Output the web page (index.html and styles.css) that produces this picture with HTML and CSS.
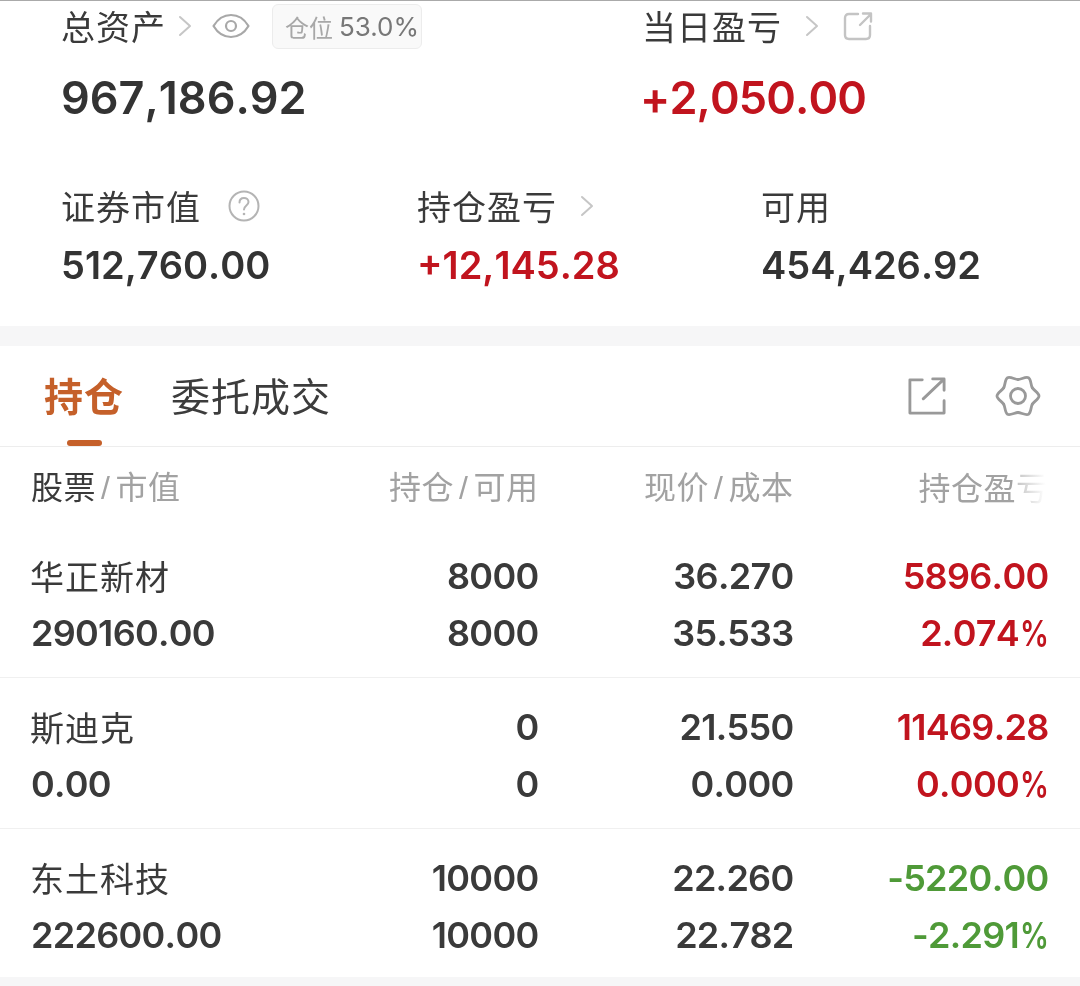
FILE: index.html
```html
<!DOCTYPE html>
<html lang="zh">
<head>
<meta charset="utf-8">
<title>持仓</title>
<link rel="stylesheet" href="styles.css">
</head>
<body>
<main class="page">
  <section class="summary">
    <div class="sum-top">
      <div class="sum-a">
        <div class="label-row">
          <span class="label">总资产</span>
          <svg class="chev first" viewBox="0 0 14 22"><path d="M2 2l10 9-10 9"/></svg>
          <svg class="eye" viewBox="0 0 38 26"><path d="M1.500 13C6 5.500 12 2 19 2s13 3.500 17.500 11C32 20.500 26 24 19 24S6 20.500 1.500 13z"/><circle cx="19" cy="13" r="5"/></svg>
          <span class="badge"><span class="badge-cjk">仓位</span> 53.0%</span>
        </div>
        <div class="big">967,186.92</div>
      </div>
      <div class="sum-b">
        <div class="label-row">
          <span class="label">当日盈亏</span>
          <svg class="chev" viewBox="0 0 14 22"><path d="M2 2l10 9-10 9"/></svg>
          <svg class="share-sm" viewBox="0 0 30 30"><path d="M15 3H6Q2 3 2 7v17q0 4 4 4h17q4 0 4-4V15M17 14L28 3M20 2.500h8v8"/></svg>
        </div>
        <div class="big up">+2,050.00</div>
      </div>
    </div>
    <div class="sum-bottom">
      <div>
        <div class="label-row">
          <span class="label">证券市值</span>
          <svg class="help" viewBox="0 0 32 32"><circle cx="16" cy="16" r="14.500"/><path d="M11.500 12.500c0-3 2-4.500 4.500-4.500s4.500 1.600 4.500 4c0 3.500-4.500 3.500-4.500 7.500"/><circle class="dot" cx="16" cy="24" r="1.300"/></svg>
        </div>
        <div class="mid">512,760.00</div>
      </div>
      <div>
        <div class="label-row">
          <span class="label">持仓盈亏</span>
          <svg class="chev" viewBox="0 0 14 22"><path d="M2 2l10 9-10 9"/></svg>
        </div>
        <div class="mid up">+12,145.28</div>
      </div>
      <div>
        <div class="label-row"><span class="label">可用</span></div>
        <div class="mid">454,426.92</div>
      </div>
    </div>
  </section>

  <section class="holdings">
    <div class="tabs">
      <div class="tab active">持仓</div>
      <div class="tab">委托成交</div>
      <div class="tools">
        <svg class="share" viewBox="0 0 40 40"><path d="M15 3H2v35h36V25M16 23L37 3M26 2h12v12"/></svg>
        <svg class="gear" viewBox="0 0 46 44">
          <path d="M23 5.500C26 5.500 30.900 2.300 33.500 3.800C36.100 5.300 35.800 11.200 37.300 13.800"/>
          <path transform="rotate(60 23 22)" d="M23 5.500C26 5.500 30.900 2.300 33.500 3.800C36.100 5.300 35.800 11.200 37.300 13.800"/>
          <path transform="rotate(120 23 22)" d="M23 5.500C26 5.500 30.900 2.300 33.500 3.800C36.100 5.300 35.800 11.200 37.300 13.800"/>
          <path transform="rotate(180 23 22)" d="M23 5.500C26 5.500 30.900 2.300 33.500 3.800C36.100 5.300 35.800 11.200 37.300 13.800"/>
          <path transform="rotate(240 23 22)" d="M23 5.500C26 5.500 30.900 2.300 33.500 3.800C36.100 5.300 35.800 11.200 37.300 13.800"/>
          <path transform="rotate(300 23 22)" d="M23 5.500C26 5.500 30.900 2.300 33.500 3.800C36.100 5.300 35.800 11.200 37.300 13.800"/>
          <circle cx="23" cy="22" r="7.500"/>
        </svg>
      </div>
    </div>

    <div class="grid head">
      <div class="h"><span class="h-dark">股票</span><span class="slash">/</span>市值</div>
      <div class="h r">持仓<span class="slash">/</span>可用</div>
      <div class="h r">现价<span class="slash">/</span>成本</div>
      <div class="h r">持仓盈<span class="fade">亏</span></div>
    </div>

    <div class="grid row">
      <div class="name">华正新材</div><div class="n r">8000</div><div class="n r">36.270</div><div class="n r up">5896.00</div>
      <div class="n">290160.00</div><div class="n r">8000</div><div class="n r">35.533</div><div class="n r up">2.074<span class="pct">%</span></div>
    </div>
    <div class="grid row">
      <div class="name">斯迪克</div><div class="n r">0</div><div class="n r">21.550</div><div class="n r up">11469.28</div>
      <div class="n">0.00</div><div class="n r">0</div><div class="n r">0.000</div><div class="n r up">0.000<span class="pct">%</span></div>
    </div>
    <div class="grid row last">
      <div class="name">东土科技</div><div class="n r">10000</div><div class="n r">22.260</div><div class="n r down">-5220.00</div>
      <div class="n">222600.00</div><div class="n r">10000</div><div class="n r">22.782</div><div class="n r down">-2.291<span class="pct">%</span></div>
    </div>
  </section>
  <div class="foot-band"></div>
</main>
</body>
</html>
```
FILE: styles.css
```css
* { box-sizing: border-box; }
html, body { margin: 0; padding: 0; background: #fff; }
body {
  width: 1080px;
  height: 986px;
  overflow: hidden;
  color: #333;
  font-family: "Inter", "Liberation Sans", "Noto Sans CJK SC", sans-serif;
}
.page { display: flex; flex-direction: column; height: 986px; border-top: 1px solid #aaa; filter: blur(0.4px); }

.summary { height: 325px; flex: none; padding-left: 61px; display: flex; flex-direction: column; }
.sum-top { display: grid; grid-template-columns: 581px 1fr; height: 183px; }
.sum-bottom { display: grid; grid-template-columns: 356px 344px 1fr; }

.label-row { display: flex; align-items: center; height: 50px; }
.sum-bottom .label-row { height: 44px; }
.label { font: 400 34px/50px "Noto Sans CJK SC", sans-serif; color: #3a3a3a; letter-spacing: 1px; white-space: nowrap; }

svg { display: block; fill: none; flex: none; stroke-linecap: round; stroke-linejoin: round; }
.chev { width: 14px; height: 22px; stroke: #c6c6c6; stroke-width: 2; margin-left: 23px; }
.chev.first { margin-left: 12px; }
.eye { width: 38px; height: 26px; stroke: #a8a8a8; stroke-width: 2.200; margin-left: 20px; }
.badge {
  margin-left: 22px; height: 45px; width: 150px; padding-left: 12px;
  border: 1px solid #ececec; border-radius: 6px; background: #f9f9f9;
  display: flex; align-items: center;
  font-size: 26px; color: #777; white-space: nowrap; gap: 6px;
}
.badge-cjk { font-family: "Noto Sans CJK SC", sans-serif; color: #a8a8a8; font-size: 24px; }
.share-sm { width: 30px; height: 30px; stroke: #c4c4c4; stroke-width: 2.400; margin-left: 24px; }
.help { width: 32px; height: 32px; stroke: #b4b4b4; stroke-width: 2; margin-left: 27px; }
.help .dot { fill: #b4b4b4; stroke: none; }

.big { font-size: 45px; font-weight: 600; line-height: 54px; margin-top: 20px; color: #333; font-kerning: none; }
.big.up { color: #c1141e; letter-spacing: -0.900px; margin-left: -2px; }
.mid { font-size: 38px; font-weight: 600; line-height: 46px; margin-top: 14px; color: #333; font-kerning: none; }
.up { color: #c1141e; }
.down { color: #4f9a38; }

.holdings { border-top: 20px solid #f6f6f7; flex: 1; display: flex; flex-direction: column; }
.tabs { height: 101px; flex: none; border-bottom: 1px solid #ededed; display: flex; padding-left: 44px; gap: 47px; position: relative; }
.tab { font: 400 39px/96px "Noto Sans CJK SC", sans-serif; color: #3c3c3c; letter-spacing: 1px; position: relative; }
.tab.active { color: #c5602a; font-weight: 700; }
.tab.active::after {
  content: ""; position: absolute; left: 23px; bottom: 0; width: 35px; height: 6px;
  background: #c5602a; border-radius: 3px;
}
.tools { margin-left: auto; display: flex; align-items: center; gap: 49px; padding-right: 39px; }
.share { width: 38px; height: 38px; stroke: #999; stroke-width: 3; }
.gear { width: 46px; height: 44px; stroke: #999; stroke-width: 2.800; }

.grid {
  display: grid;
  grid-template-columns: 252.500px 255px 255px 255px;
  padding-left: 31px;
}
.head { height: 80px; flex: none; align-items: center; padding-bottom: 2px; }
.h { font: 400 32px/44px "Noto Sans CJK SC", sans-serif; color: #a2a2a2; white-space: nowrap; letter-spacing: 0.500px; }
.h-dark { color: #3a3a3a; }
.slash { font-family: "Liberation Sans", sans-serif; color: #a2a2a2; padding: 0 5px; }
.fade { background: linear-gradient(90deg, #c4c4c4 0%, #fff 90%); -webkit-background-clip: text; background-clip: text; color: transparent; }
.r { text-align: right; }

.row { height: 151px; flex: none; border-bottom: 1px solid #f0f0f0; grid-auto-rows: 57px; align-content: start; padding-top: 21px; }
.row.last { height: 148px; border-bottom: 0; }
.name { font: 400 34px/55px "Noto Sans CJK SC", sans-serif; color: #3a3a3a; letter-spacing: 1px; margin-left: -1px; }
.n { font-size: 36px; font-weight: 600; line-height: 57px; color: #3a3a3a; letter-spacing: -0.700px; font-kerning: none; }
.pct { display: inline-block; transform: scaleX(0.8); transform-origin: right center; margin-left: -6px; }
.n.up { color: #c1141e; }
.n.down { color: #4f9a38; }
.foot-band { height: 9px; flex: none; background: #f6f6f7; }
```
